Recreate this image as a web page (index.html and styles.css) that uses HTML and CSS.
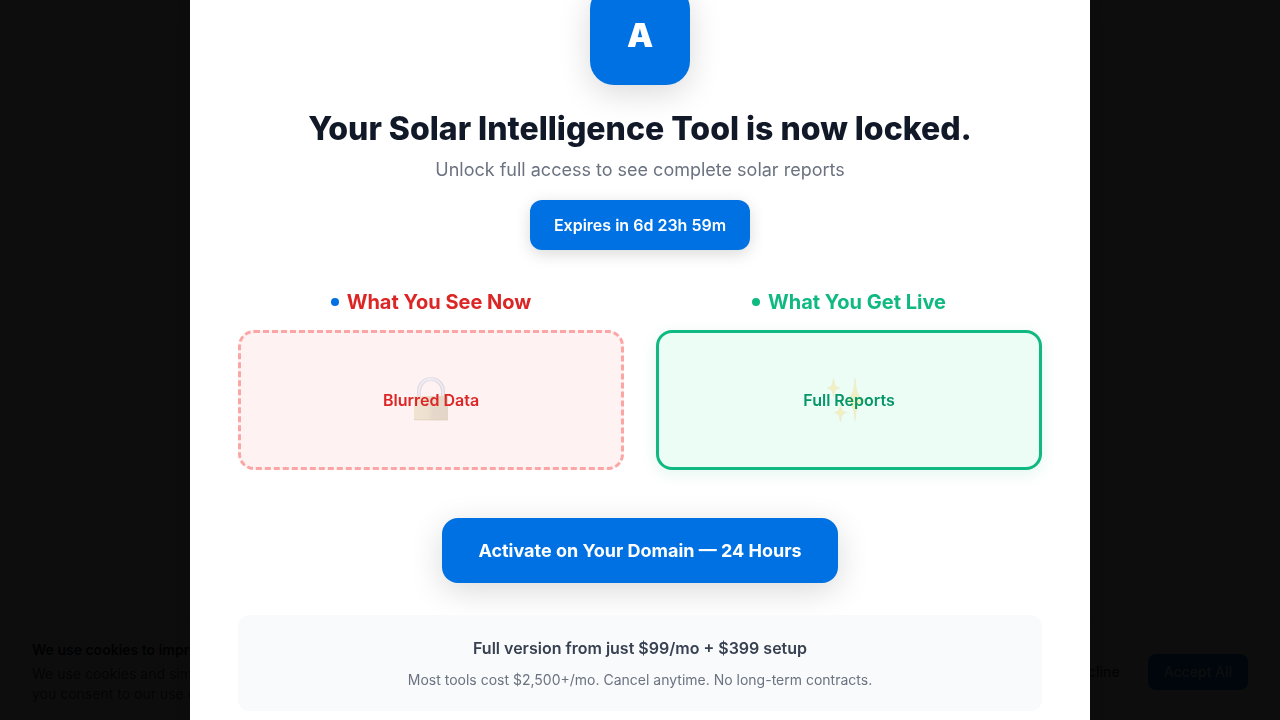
FILE: index.html
```html
<!DOCTYPE html>
<html lang="en">
<head>
<meta charset="utf-8">
<meta name="viewport" content="width=device-width, initial-scale=1">
<title>Solar Intelligence Tool</title>
<link rel="stylesheet" href="styles.css">
</head>
<body>
<aside class="cookie-bar" aria-label="Cookies">
  <div class="cookie-copy">
    <p class="cookie-title">We use cookies to improve your experience</p>
    <p class="cookie-text">We use cookies and similar technologies;<br>you consent to our use of cookies.</p>
  </div>
  <div class="cookie-actions">
    <button class="cookie-btn" type="button">Decline</button>
    <button class="cookie-btn cookie-accept" type="button">Accept All</button>
  </div>
</aside>
<div class="overlay">
  <main class="modal" role="dialog" aria-labelledby="lock-title">
    <div class="logo">A</div>
    <h1 class="title" id="lock-title">Your Solar Intelligence Tool is now locked.</h1>
    <p class="subtitle">Unlock full access to see complete solar reports</p>
    <div class="countdown">Expires in 6d 23h 59m</div>
    <div class="compare">
      <section>
        <h2 class="compare-title now">What You See Now</h2>
        <div class="card card-now">
          <svg class="emblem" viewBox="0 0 48 48" aria-hidden="true">
            <defs>
              <linearGradient id="brass" x1="0" x2="1"><stop offset="0" stop-color="#d5c387"/><stop offset=".4" stop-color="#ccba80"/><stop offset=".55" stop-color="#b3a070"/><stop offset="1" stop-color="#a89466"/></linearGradient>
              <linearGradient id="steel" x1="0" x2="1"><stop offset="0" stop-color="#9ba5c5"/><stop offset=".5" stop-color="#b4bcd8"/><stop offset="1" stop-color="#929cbd"/></linearGradient>
            </defs>
            <path d="M12 20V14a12 12 0 0 1 24 0v6" fill="none" stroke="url(#steel)" stroke-width="4"/>
            <path d="M12 20v-6a12 12 0 0 1 24 0v6" fill="none" stroke="#dfe4fa" stroke-width="1.5"/>
            <rect x="7" y="19" width="34" height="24.500" rx="1" fill="url(#brass)"/>
            <path d="M7 42.500h34" stroke="#a28c55" stroke-width=".7"/>
          </svg>
          <span class="card-label">Blurred Data</span>
        </div>
      </section>
      <section>
        <h2 class="compare-title live">What You Get Live</h2>
        <div class="card card-live">
          <svg class="emblem" viewBox="0 0 48 48" aria-hidden="true">
            <g fill="#ffd54f" stroke="#f3b65b" stroke-width=".7">
              <path d="M30 1.500C31 16 33 21 41 23C33 25 31 30 30 43.500C29 30 27 25 19 23C27 21 29 16 30 1.500Z"/>
              <path d="M8.500 1.500C9.300 8 10 10 14.500 11C10 12 9.300 14 8.500 20C7.700 14 7 12 2.500 11C7 10 7.700 8 8.500 1.500Z"/>
              <path d="M15.500 27C16.300 33 17 34.500 21.500 35.500C17 36.500 16.300 39 15.500 45C14.700 39 14 36.500 9.500 35.500C14 34.500 14.700 33 15.500 27Z"/>
            </g>
          </svg>
          <span class="card-label">Full Reports</span>
        </div>
      </section>
    </div>
    <button class="cta" type="button">Activate on Your Domain — 24 Hours</button>
    <div class="note">
      <p class="note-price">Full version from just $99/mo + $399 setup</p>
      <p class="note-terms">Most tools cost $2,500+/mo. Cancel anytime. No long-term contracts.</p>
    </div>
  </main>
</div>
</body>
</html>
```
FILE: styles.css
```css
* { box-sizing: border-box; margin: 0; }

body {
  min-height: 100vh;
  overflow: hidden;
  background: #fff;
  color: #111827;
  font-family: Inter, "Liberation Sans", sans-serif;
  line-height: 1.6;
}

button { border: 0; font-family: inherit; cursor: pointer; }

.cookie-bar {
  position: fixed;
  inset: auto 0 0;
  display: flex;
  align-items: center;
  justify-content: space-between;
  gap: 16px;
  padding: 16px 32px;
  border-top: 1px solid #e5e7eb;
  background: #fff;
  font-size: 14px;
  line-height: 20px;
}
.cookie-title { margin-bottom: 4px; font-weight: 600; }
.cookie-text { color: #4b5563; }
.cookie-actions { display: flex; gap: 12px; }
.cookie-btn {
  padding: 8px 16px;
  border-radius: 8px;
  background: #f3f4f6;
  color: #374151;
  font-size: 14px;
  font-weight: 500;
  line-height: 20px;
}
.cookie-accept { background: #0071e3; color: #fff; }

.overlay {
  position: fixed;
  inset: 0;
  display: flex;
  align-items: center;
  justify-content: center;
  background: rgba(0, 0, 0, 0.95);
}

.modal {
  display: flex;
  flex-direction: column;
  align-items: center;
  width: 100%;
  max-width: 900px;
  padding: 48px 48px 72px;
  border-radius: 24px;
  background: #fff;
  box-shadow: 0 25px 50px rgba(0, 0, 0, 0.25);
  text-align: center;
}

.logo {
  display: grid;
  place-items: center;
  width: 100px;
  height: 100px;
  margin-bottom: 24px;
  border-radius: 24px;
  background: #0071e3;
  box-shadow: 0 8px 32px rgba(0, 0, 0, 0.15);
  color: #fff;
  font-size: 33px;
  font-weight: 900;
}

.title { margin-bottom: 8px; font-size: 32px; font-weight: 800; line-height: 39px; }
.subtitle { margin-bottom: 16px; color: #6b7280; font-size: 18px; line-height: 28px; }

.countdown {
  margin-bottom: 36px;
  padding: 12px 24px;
  border-radius: 12px;
  background: #0071e3;
  box-shadow: 0 4px 16px rgba(0, 0, 0, 0.15);
  color: #fff;
  font-size: 16px;
  font-weight: 600;
  line-height: 26px;
}

.compare {
  display: grid;
  grid-template-columns: 1fr 1fr;
  gap: 32px;
  width: 100%;
  margin-bottom: 48px;
}
.compare-title {
  display: flex;
  align-items: center;
  justify-content: center;
  gap: 8px;
  margin-bottom: 12px;
  font-size: 20px;
  font-weight: 700;
  line-height: 32px;
}
.compare-title::before { content: ""; width: 8px; height: 8px; border-radius: 50%; }
.now { color: #dc2626; }
.now::before { background: #0071e3; }
.live { color: #10b981; }
.live::before { background: #10b981; }

.card {
  position: relative;
  display: grid;
  place-items: center;
  height: 140px;
  border: 3px solid;
  border-radius: 16px;
  font-size: 16px;
  font-weight: 600;
  line-height: 26px;
}
.card-now { border-color: #fca5a5; border-style: dashed; background: #fef2f2; color: #dc2626; }
.card-live {
  border-color: #10b981;
  background: #ecfdf5;
  box-shadow: 0 4px 16px rgba(16, 185, 129, 0.12);
  color: #059669;
}
.emblem {
  position: absolute;
  inset: 2px 0 0;
  width: 48px;
  height: 48px;
  margin: auto;
  opacity: 0.3;
}
.card-label { position: relative; }

.cta {
  margin-bottom: 32px;
  padding: 18px 36px;
  border-radius: 16px;
  background: #0071e3;
  box-shadow: 0 8px 32px rgba(0, 0, 0, 0.15);
  color: #fff;
  font-size: 18px;
  font-weight: 700;
  line-height: 29px;
}

.note { width: 100%; padding: 20px; border-radius: 12px; background: #f9fafb; }
.note-price { margin-bottom: 8px; color: #374151; font-size: 16px; font-weight: 600; line-height: 26px; }
.note-terms { color: #6b7280; font-size: 14px; line-height: 22px; }
```
